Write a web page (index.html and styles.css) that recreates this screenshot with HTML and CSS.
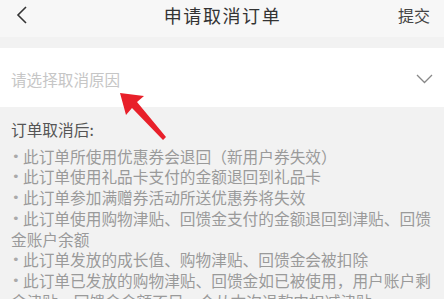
FILE: index.html
```html
<!DOCTYPE html>
<html lang="zh-CN">
<head>
    <meta charset="UTF-8">
    <meta name="viewport" content="width=device-width, initial-scale=1.0">
    <title>申请取消订单</title>
    <link rel="stylesheet" href="styles.css">
</head>
<body>
    <div class="page">
        <div class="nav-bar">
            <span class="nav-back">
                <svg width="14" height="20" viewBox="0 0 14 20">
                    <polyline points="11,2 3,10 11,18" fill="none" stroke="#333" stroke-width="1.6"/>
                </svg>
            </span>
            <span class="nav-title">申请取消订单</span>
            <span class="nav-submit">提交</span>
        </div>

        <div class="reason-select">
            <span class="reason-placeholder">请选择取消原因</span>
            <svg class="reason-arrow" width="17" height="10" viewBox="0 0 17 10">
                <polyline points="1,1 8.5,8.5 16,1" fill="none" stroke="#888" stroke-width="1.3"/>
            </svg>
        </div>

        <div class="notice">
            <div class="notice-title">订单取消后:</div>
            <ul class="notice-list">
                <li>此订单所使用优惠券会退回（新用户券失效）</li>
                <li>此订单使用礼品卡支付的金额退回到礼品卡</li>
                <li>此订单参加满赠券活动所送优惠券将失效</li>
                <li>此订单使用购物津贴、回馈金支付的金额退回到津贴、回馈金账户余额</li>
                <li>此订单发放的成长值、购物津贴、回馈金会被扣除</li>
                <li>此订单已发放的购物津贴、回馈金如已被使用，用户账户剩余津贴、回馈金金额不足，会从本次退款中扣减津贴</li>
            </ul>
        </div>

        <!-- red pointer over the select row -->
        <svg class="pointer" width="60" height="50" viewBox="0 0 60 50">
            <polygon points="0,0 24,3 17,9 46,44 43,47 12,15 6,22" fill="#e8202a"/>
        </svg>
    </div>
</body>
</html>
```

FILE: styles.css
```css
* {
    margin: 0;
    padding: 0;
    box-sizing: border-box;
}

body {
    width: 444px;
    height: 299px;
    overflow: hidden;
    background: #f2f2f2;
    font-family: "Noto Sans CJK SC", "Noto Sans", sans-serif;
}

.page {
    position: relative;
    height: 100%;
}

.nav-bar {
    height: 37px;
    background: #f7f7f7;
    display: flex;
    align-items: center;
    justify-content: space-between;
    padding: 0 14px 7px 15px;
    margin-bottom: 11px;
}

.nav-back {
    display: flex;
    width: 40px;
}

.nav-title {
    font-size: 18px;
    letter-spacing: 1.6px;
    color: #333;
}

.nav-submit {
    width: 40px;
    text-align: right;
    font-size: 16px;
    color: #444;
}

.reason-select {
    height: 59px;
    background: #fff;
    display: flex;
    align-items: center;
    justify-content: space-between;
    padding: 2px 11px 0 11px;
}

.reason-placeholder {
    font-size: 15.6px;
    color: #c6c6c6;
}

.notice {
    padding: 13px 11px 0 11px;
    font-size: 15.7px;
    line-height: 20.7px;
}

.notice-title {
    color: #555;
    margin-bottom: 6px;
}

.notice-list {
    list-style: none;
    color: #9a9a9a;
}

.notice-list li::before {
    content: "•";
    display: inline-block;
    vertical-align: top;
    width: 11px;
    padding-left: 1px;
    font-family: "DejaVu Sans", sans-serif;
    font-size: 13px;
    line-height: 20.7px;
    color: #aaa;
}

.pointer {
    position: absolute;
    left: 120px;
    top: 93px;
}
```
